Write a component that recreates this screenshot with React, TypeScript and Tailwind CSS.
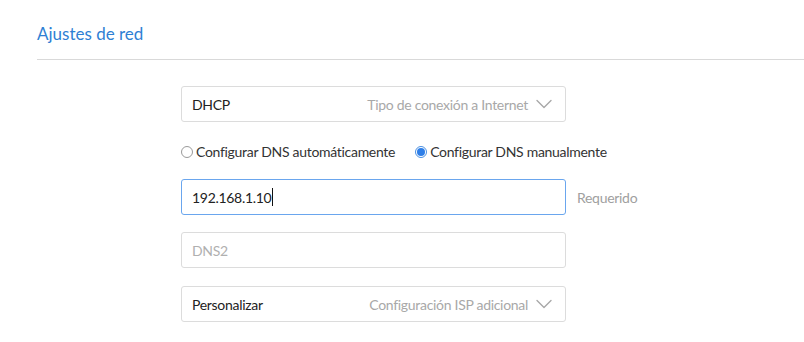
import { ChevronDown } from 'lucide-react';

function SelectBox({ value, label }: { value: string; label: string }) {
  return (
    <div className="flex h-[36px] w-[385px] items-center justify-between rounded-[3px] border border-[#dcdcdc] bg-white pl-[10px] pr-[7px]">
      <span className="text-[14px] text-[#222]">{value}</span>
      <span className="flex items-center gap-[2px] text-[14px] text-[#a8a8a8]">
        {label}
        <ChevronDown className="h-[28px] w-[28px] text-[#a8a8a8]" strokeWidth={1.2} />
      </span>
    </div>
  );
}

function Radio({ checked, label }: { checked?: boolean; label: string }) {
  return (
    <label className="flex items-center gap-[3px] text-[14px] text-[#333]">
      {checked ? (
        <span className="flex h-[12px] w-[12px] items-center justify-center rounded-full border border-[#4a90e2] bg-white">
          <span className="h-[8px] w-[8px] rounded-full bg-[#2d7ee8]" />
        </span>
      ) : (
        <span className="h-[12px] w-[12px] rounded-full border border-[#9a9a9a] bg-white" />
      )}
      {label}
    </label>
  );
}

export default function App() {
  return (
    <div className="h-[342px] w-[804px] bg-white font-['Lato',sans-serif] tracking-[-0.3px]">
      <div className="pl-[37px] pt-[22px]">
        <h1 className="pb-[13px] text-[17px] leading-[24px] tracking-normal text-[#2f7fd4]">Ajustes de red</h1>
        <div className="h-px bg-[#d9d9d9]" />
      </div>

      <div className="ml-[181px] mt-[26px] flex flex-col">
        <SelectBox value="DHCP" label="Tipo de conexión a Internet" />

        <div className="mt-[19px] flex items-center gap-[20px]">
          <Radio label="Configurar DNS automáticamente" />
          <Radio checked label="Configurar DNS manualmente" />
        </div>

        <div className="mt-[17px] flex items-center gap-[11px]">
          <div className="flex h-[36px] w-[385px] items-center rounded-[3px] border border-[#6aa6ee] bg-white px-[10px] text-[14px] text-[#222]">
            192.168.1.10
            <span className="ml-px h-[18px] w-px bg-[#111]" />
          </div>
          <span className="text-[14px] text-[#a0a0a0]">Requerido</span>
        </div>

        <div className="mt-[17px] flex h-[36px] w-[385px] items-center rounded-[3px] border border-[#dcdcdc] bg-white px-[10px] text-[14px] text-[#b0b0b0]">
          DNS2
        </div>

        <div className="mt-[18px]">
          <SelectBox value="Personalizar" label="Configuración ISP adicional" />
        </div>
      </div>
    </div>
  );
}
